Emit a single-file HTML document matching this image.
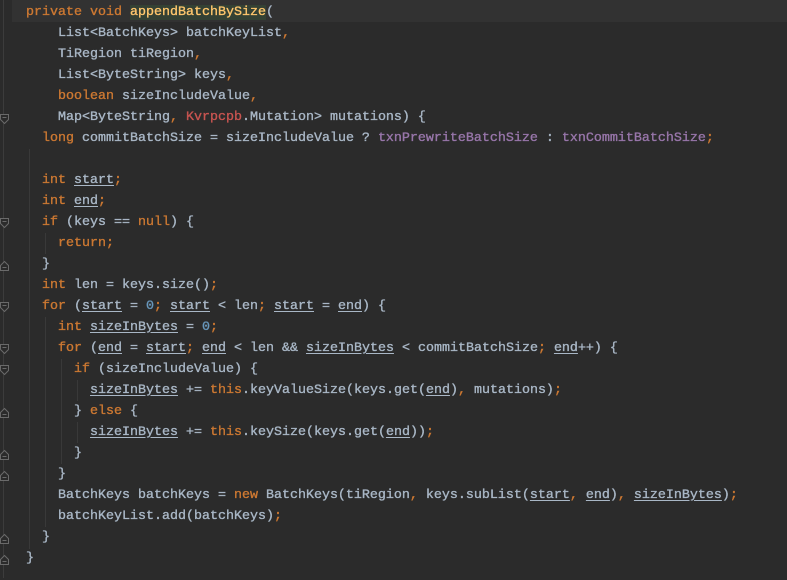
<!DOCTYPE html>
<html><head><meta charset="utf-8"><style>
body{margin:0;width:787px;height:578px;background:#2b2b2b;overflow:hidden;position:relative;font-family:"Liberation Mono",monospace;font-size:13.33px;color:#a9b7c6}
.l{position:absolute;left:26px;height:21px;line-height:21px;white-space:pre;margin-top:2px;-webkit-text-stroke:0.35px currentColor}
.k{color:#cc7832}.n{color:#6897bb}.p{color:#9876aa}.r{color:#c75450}.m{color:#ffc66d;background:#344134}
.u{text-decoration:underline;text-underline-offset:2px}
.g{position:absolute;width:1px;background:#393939}
#hl{position:absolute;left:12px;top:0;width:775px;height:22px;background:#323232}
#gl{position:absolute;left:3px;top:0;width:1px;height:578px;background:#3c3c3c}
</style></head><body>
<div id="hl"></div>
<div id="gl"></div>
<div class="g" style="left:29px;top:149px;height:400px"></div>
<div class="g" style="left:45px;top:233px;height:21px"></div>
<div class="g" style="left:45px;top:317px;height:210px"></div>
<div class="g" style="left:61px;top:359px;height:105px"></div>
<div class="g" style="left:77px;top:380px;height:21px"></div>
<div class="g" style="left:77px;top:422px;height:21px"></div>
<svg style="position:absolute;left:0;top:2px" width="12" height="578">
<g fill="#2b2b2b" stroke="#6a6a6a" stroke-width="1">
<path d="M0.5 112.5h8v5l-4 4l-4-4z"/><path d="M2.5 115.5h4"/>
<path d="M0.5 216.5h8v5l-4 4l-4-4z"/><path d="M2.5 219.5h4"/>
<path d="M0.5 268.5h8v-5l-4-4l-4 4z"/><path d="M2.5 265.5h4"/>
<path d="M0.5 300.5h8v5l-4 4l-4-4z"/><path d="M2.5 303.5h4"/>
<path d="M0.5 342.5h8v5l-4 4l-4-4z"/><path d="M2.5 345.5h4"/>
<path d="M0.5 363.5h8v5l-4 4l-4-4z"/><path d="M2.5 366.5h4"/>
<path d="M0.5 415.5h8v-5l-4-4l-4 4z"/><path d="M2.5 412.5h4"/>
<path d="M0.5 457.5h8v-5l-4-4l-4 4z"/><path d="M2.5 454.5h4"/>
<path d="M0.5 478.5h8v-5l-4-4l-4 4z"/><path d="M2.5 475.5h4"/>
<path d="M0.5 541.5h8v-5l-4-4l-4 4z"/><path d="M2.5 538.5h4"/>
<path d="M0.5 562.5h8v-5l-4-4l-4 4z"/><path d="M2.5 559.5h4"/>
</g></svg>
<div class="l" style="top:0"><span class="k">private void </span><span class="m">appendBatchBySize</span>(</div>
<div class="l" style="top:21px">    List&lt;BatchKeys&gt; batchKeyList<span class="k">,</span></div>
<div class="l" style="top:42px">    TiRegion tiRegion<span class="k">,</span></div>
<div class="l" style="top:63px">    List&lt;ByteString&gt; keys<span class="k">,</span></div>
<div class="l" style="top:84px">    <span class="k">boolean </span>sizeIncludeValue<span class="k">,</span></div>
<div class="l" style="top:105px">    Map&lt;ByteString<span class="k">, </span><span class="r">Kvrpcpb</span>.Mutation&gt; mutations) {</div>
<div class="l" style="top:126px">  <span class="k">long </span>commitBatchSize = sizeIncludeValue ? <span class="p">txnPrewriteBatchSize</span> : <span class="p">txnCommitBatchSize</span><span class="k">;</span></div>
<div class="l" style="top:168px">  <span class="k">int </span><span class="u">start</span><span class="k">;</span></div>
<div class="l" style="top:189px">  <span class="k">int </span><span class="u">end</span><span class="k">;</span></div>
<div class="l" style="top:210px">  <span class="k">if </span>(keys == <span class="k">null</span>) {</div>
<div class="l" style="top:231px">    <span class="k">return;</span></div>
<div class="l" style="top:252px">  }</div>
<div class="l" style="top:273px">  <span class="k">int </span>len = keys.size()<span class="k">;</span></div>
<div class="l" style="top:294px">  <span class="k">for </span>(<span class="u">start</span> = <span class="n">0</span><span class="k">; </span><span class="u">start</span> &lt; len<span class="k">; </span><span class="u">start</span> = <span class="u">end</span>) {</div>
<div class="l" style="top:315px">    <span class="k">int </span><span class="u">sizeInBytes</span> = <span class="n">0</span><span class="k">;</span></div>
<div class="l" style="top:336px">    <span class="k">for </span>(<span class="u">end</span> = <span class="u">start</span><span class="k">; </span><span class="u">end</span> &lt; len &amp;&amp; <span class="u">sizeInBytes</span> &lt; commitBatchSize<span class="k">; </span><span class="u">end</span>++) {</div>
<div class="l" style="top:357px">      <span class="k">if </span>(sizeIncludeValue) {</div>
<div class="l" style="top:378px">        <span class="u">sizeInBytes</span> += <span class="k">this</span>.keyValueSize(keys.get(<span class="u">end</span>)<span class="k">, </span>mutations)<span class="k">;</span></div>
<div class="l" style="top:399px">      } <span class="k">else </span>{</div>
<div class="l" style="top:420px">        <span class="u">sizeInBytes</span> += <span class="k">this</span>.keySize(keys.get(<span class="u">end</span>))<span class="k">;</span></div>
<div class="l" style="top:441px">      }</div>
<div class="l" style="top:462px">    }</div>
<div class="l" style="top:483px">    BatchKeys batchKeys = <span class="k">new </span>BatchKeys(tiRegion<span class="k">, </span>keys.subList(<span class="u">start</span><span class="k">, </span><span class="u">end</span>)<span class="k">, </span><span class="u">sizeInBytes</span>)<span class="k">;</span></div>
<div class="l" style="top:504px">    batchKeyList.add(batchKeys)<span class="k">;</span></div>
<div class="l" style="top:525px">  }</div>
<div class="l" style="top:546px">}</div>
</body></html>
